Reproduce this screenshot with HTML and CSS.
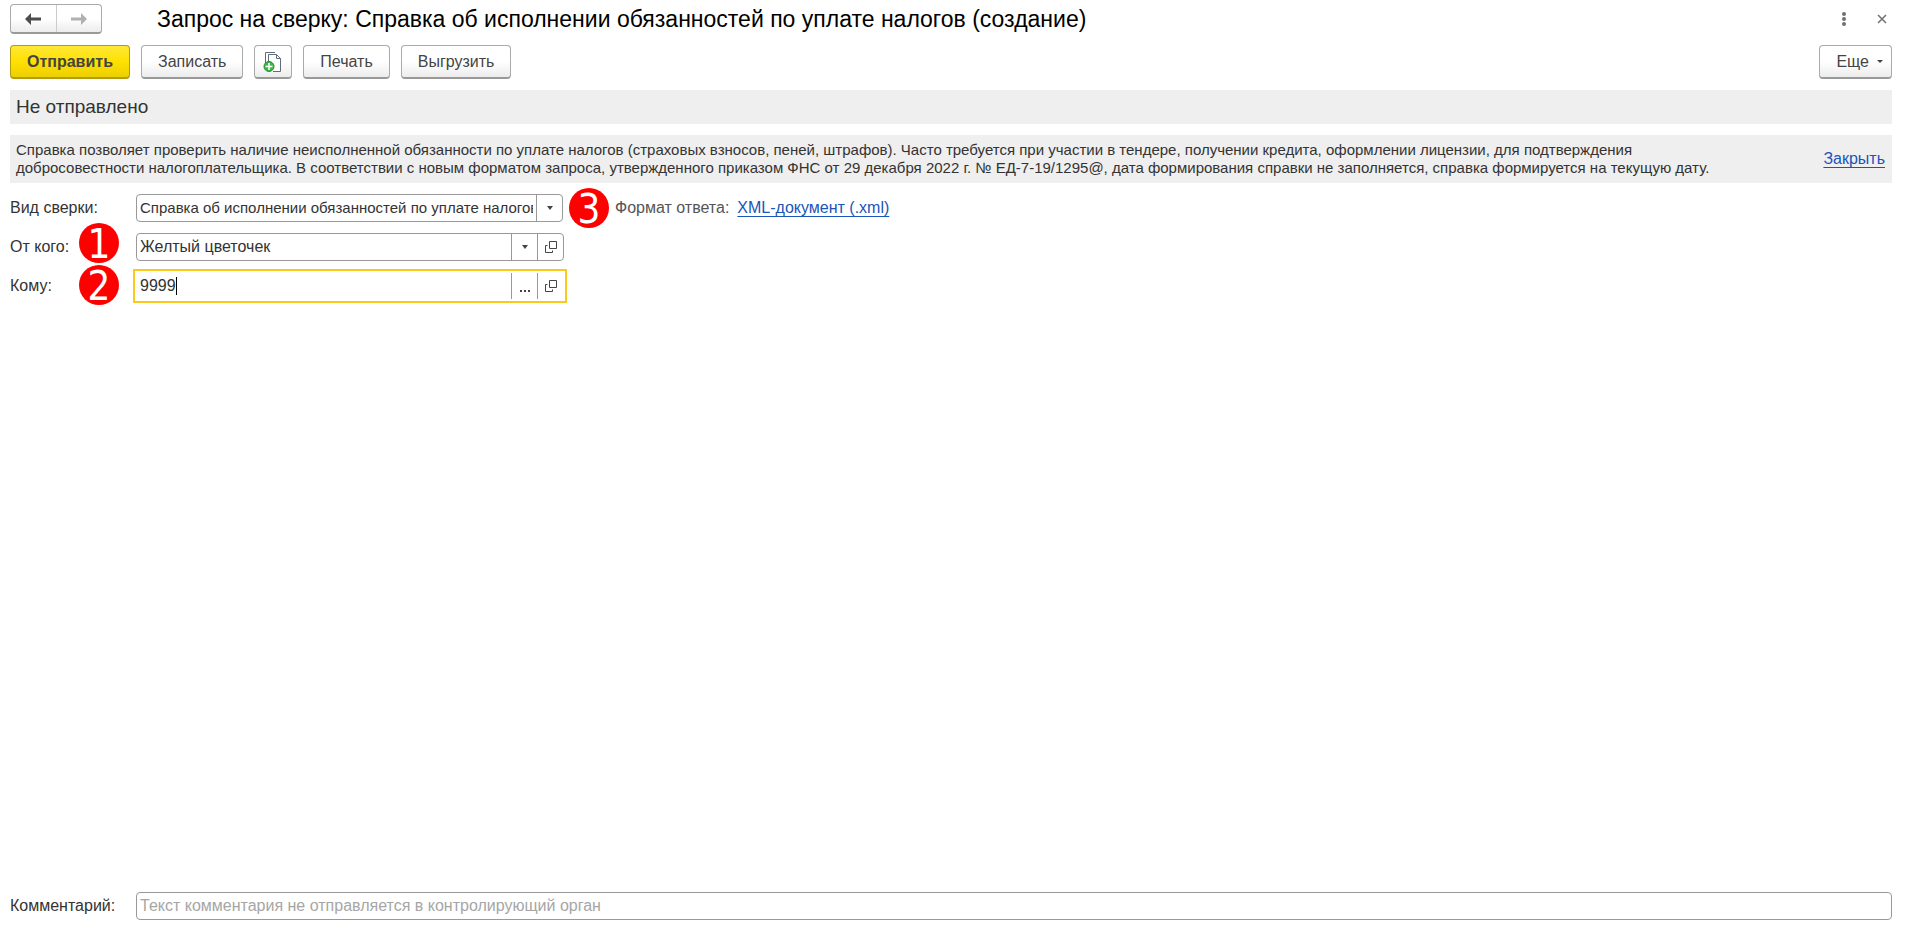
FILE: index.html
```html
<!DOCTYPE html>
<html lang="ru">
<head>
    <meta charset="UTF-8">
    <meta name="viewport" content="width=device-width, initial-scale=1.0">
    <title>Запрос на сверку</title>
    <link rel="stylesheet" href="styles.css">
</head>
<body>

<div class="page">
    <header class="titlebar">
        <div class="nav">
            <button type="button" class="nav-button" aria-label="Назад">
                <svg width="18" height="12" viewBox="0 0 18 12"><path d="M7 0v4.500h10v3H7V12L1 6z" fill="#4d4d4d"/></svg>
            </button>
            <button type="button" class="nav-button" aria-label="Вперед">
                <svg width="18" height="12" viewBox="0 0 18 12"><path d="M11 0v4.500H1v3h10V12l6-6z" fill="#b0b0b0"/></svg>
            </button>
        </div>
        <h1 class="title">Запрос на сверку: Справка об исполнении обязанностей по уплате налогов (создание)</h1>
        <button type="button" class="icon-button" aria-label="Меню">
            <svg width="4" height="14" viewBox="0 0 4 14" fill="#707070"><circle cx="2" cy="2" r="2"/><circle cx="2" cy="7" r="2"/><circle cx="2" cy="12" r="2"/></svg>
        </button>
        <button type="button" class="icon-button" aria-label="Закрыть окно">
            <svg width="10" height="10" viewBox="0 0 10 10"><path d="M1 1l8 8M9 1L1 9" stroke="#707070" stroke-width="1.500"/></svg>
        </button>
    </header>

    <div class="toolbar">
        <button type="button" class="button button-main">Отправить</button>
        <button type="button" class="button">Записать</button>
        <button type="button" class="button button-icon" aria-label="Создать на основании">
            <svg width="20" height="22" viewBox="0 0 20 22">
                <path d="M2.500 16V1.500H12" fill="none" stroke="#5f6c7b"/>
                <path d="M5.500 18.500V3.500h8l4 4v13H10" fill="#fff" stroke="#5f6c7b"/>
                <path d="M13.500 3.500v4h4" fill="none" stroke="#5f6c7b"/>
                <circle cx="6" cy="15.500" r="5" fill="#3cb84a" stroke="#1f9030"/>
                <path d="M6 12v7M2.500 15.500h7" stroke="#fff" stroke-width="1.600"/>
            </svg>
        </button>
        <button type="button" class="button">Печать</button>
        <button type="button" class="button">Выгрузить</button>
        <button type="button" class="button button-more">Еще
            <svg width="6" height="3" viewBox="0 0 6 3"><path d="M0 0h6L3 3z" fill="#444"/></svg>
        </button>
    </div>

    <div class="status">Не отправлено</div>

    <div class="notice">
        <p class="notice-text">Справка позволяет проверить наличие неисполненной обязанности по уплате налогов (страховых взносов, пеней, штрафов). Часто требуется при участии в тендере, получении кредита, оформлении лицензии, для подтверждения добросовестности налогоплательщика. В соответствии с новым форматом запроса, утвержденного приказом ФНС от 29 декабря 2022 г. № ЕД-7-19/1295@, дата формирования справки не заполняется, справка формируется на текущую дату.</p>
        <a href="#" class="link">Закрыть</a>
    </div>

    <form class="form">
        <div class="row">
            <label class="label" for="kind">Вид сверки:</label>
            <div class="field field-select">
                <select class="input" id="kind">
                    <option>Справка об исполнении обязанностей по уплате налогов</option>
                </select>
                <span class="cell"><svg width="6" height="4" viewBox="0 0 6 4"><path d="M0 0h6L3 4z" fill="#444"/></svg></span>
            </div>
            <div class="format">
                <span class="badge badge-format">3</span>
                <span>Формат ответа:</span>
                <a href="#" class="link">XML-документ (.xml)</a>
            </div>
        </div>
        <div class="row">
            <label class="label" for="from">От кого:</label>
            <span class="badge badge-from">1</span>
            <div class="field">
                <input type="text" class="input" id="from" value="Желтый цветочек">
                <button type="button" class="cell" aria-label="Выбрать из списка"><svg width="6" height="4" viewBox="0 0 6 4"><path d="M0 0h6L3 4z" fill="#444"/></svg></button>
                <button type="button" class="cell" aria-label="Открыть"><svg width="12" height="12" viewBox="0 0 12 12"><path d="M4.500 .5h7v7h-7zM2.500 4.500h-2v7h7v-2" fill="none" stroke="#444"/></svg></button>
            </div>
        </div>
        <div class="row">
            <label class="label" for="to">Кому:</label>
            <span class="badge badge-to">2</span>
            <div class="field field-active">
                <div class="entry">
                    <input type="text" class="input" id="to" value="9999">
                    <span class="caret"></span>
                </div>
                <button type="button" class="cell" aria-label="Выбрать"><svg class="dots" width="10" height="2" viewBox="0 0 10 2"><path d="M0 0h2v2H0zM4 0h2v2H4zM8 0h2v2H8z" fill="#444"/></svg></button>
                <button type="button" class="cell" aria-label="Открыть"><svg width="12" height="12" viewBox="0 0 12 12"><path d="M4.500 .5h7v7h-7zM2.500 4.500h-2v7h7v-2" fill="none" stroke="#444"/></svg></button>
            </div>
        </div>
    </form>

    <div class="row comment">
        <label class="label" for="comment">Комментарий:</label>
        <div class="field field-wide">
            <input type="text" class="input" id="comment" placeholder="Текст комментария не отправляется в контролирующий орган">
        </div>
    </div>
</div>

</body>
</html>
```
FILE: styles.css
```css
* {
    box-sizing: border-box;
}

body {
    margin: 0;
    background: white;
    color: #333;
    font-family: "Liberation Sans", Arial, sans-serif;
    font-size: 16px;
    line-height: 18px;
}

button,
input,
select {
    font: inherit;
    color: inherit;
}

.page {
    display: flex;
    flex-direction: column;
    min-height: 100vh;
    padding: 4px 17px 11px 10px;
}

.titlebar {
    display: flex;
    align-items: center;
    height: 30px;
}

.nav {
    display: flex;
    width: 92px;
    height: 30px;
    margin-right: 55px;
    border: 1px solid #aaa;
    border-bottom: 2px solid #999;
    border-radius: 4px;
    background: linear-gradient(white 50%, #ececec);
}

.nav-button {
    display: flex;
    flex: 1;
    align-items: center;
    justify-content: center;
    padding: 0;
    border: none;
    background: none;
}

.nav-button + .nav-button {
    border-left: 1px solid #ccc;
}

.title {
    flex: 1;
    margin: 0;
    color: black;
    font-size: 23px;
    font-weight: normal;
    line-height: 30px;
}

.icon-button {
    display: flex;
    align-items: center;
    justify-content: center;
    width: 20px;
    height: 20px;
    margin-left: 18px;
    padding: 0;
    border: none;
    background: none;
}

.toolbar {
    display: flex;
    gap: 11px;
    margin-top: 11px;
}

.button {
    height: 34px;
    padding: 0 16px;
    border: 1px solid #aaa;
    border-bottom: 2px solid #999;
    border-radius: 4px;
    background: linear-gradient(white 50%, #ececec);
    color: #444;
}

.button-main {
    border-color: #b09c0c;
    background: linear-gradient(#ffe838, #ffe000 50%, #ecd000);
    font-weight: bold;
}

.button-icon {
    display: flex;
    align-items: center;
    justify-content: center;
    width: 38px;
    padding: 0;
}

.button-more {
    display: flex;
    align-items: center;
    gap: 8px;
    margin-left: auto;
    padding: 0 8px 0 16px;
}

.status {
    margin-top: 11px;
    padding: 0 6px;
    background: #efefef;
    font-size: 19px;
    line-height: 34px;
}

.notice {
    display: flex;
    align-items: center;
    justify-content: space-between;
    margin-top: 11px;
    padding: 6px 7px 6px 6px;
    background: #efefef;
}

.notice-text {
    max-width: 1740px;
    margin: 0;
    font-size: 15px;
}

.link {
    color: #1a55b8;
    text-underline-offset: 3px;
}

.form {
    display: flex;
    flex-direction: column;
    gap: 11px;
    margin-top: 11px;
}

.row {
    display: flex;
    align-items: center;
    position: relative;
    height: 28px;
}

.label {
    flex: none;
    width: 126px;
}

.field {
    display: flex;
    width: 428px;
    height: 28px;
    border: 1px solid #999;
    border-radius: 4px;
    background: white;
}

.field-select {
    width: 427px;
    font-size: 15px;
}

.field-wide {
    flex: 1;
}

/* толстая рамка выходит за границы обычного поля */
.field-active {
    border-color: transparent;
    border-radius: 0;
    outline: 2px solid #fcc81e;
    outline-offset: 1px;
}

.input {
    flex: 1;
    min-width: 0;
    padding: 0 3px;
    border: none;
    outline: none;
    background: none;
    appearance: none;
}

.input::placeholder {
    color: #a6a6a6;
}

.cell {
    display: flex;
    align-items: center;
    justify-content: center;
    width: 26px;
    padding: 0;
    border: none;
    border-left: 1px solid #999;
    background: none;
}

.dots {
    margin-top: 10px;
}

.entry {
    display: flex;
    flex: 1;
    position: relative;
}

.caret {
    position: absolute;
    top: 4px;
    left: 39px;
    width: 1px;
    height: 18px;
    background: black;
}

.format {
    display: flex;
    gap: 8px;
    position: relative;
    padding-left: 52px;
    color: #555;
}

.badge {
    position: absolute;
    width: 40px;
    height: 40px;
    border-radius: 50%;
    background: red;
    color: white;
    font-family: "DejaVu Sans Condensed", "DejaVu Sans", sans-serif;
    font-size: 40px;
    line-height: 42px;
    text-align: center;
}

.badge-from {
    top: -10px;
    left: 69px;
}

.badge-to {
    top: -7px;
    left: 69px;
}

.badge-format {
    top: -11px;
    left: 6px;
}

.comment {
    margin-top: auto;
}
```
